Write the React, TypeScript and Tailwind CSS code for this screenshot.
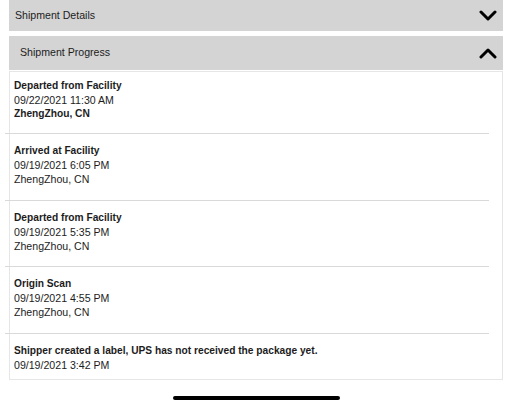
import React from 'react';

type Activity = {
  status: string;
  date: string;
  location?: string;
  boldLocation?: boolean;
};

const activities: Activity[] = [
  { status: 'Departed from Facility', date: '09/22/2021 11:30 AM', location: 'ZhengZhou, CN', boldLocation: true },
  { status: 'Arrived at Facility', date: '09/19/2021 6:05 PM', location: 'ZhengZhou, CN' },
  { status: 'Departed from Facility', date: '09/19/2021 5:35 PM', location: 'ZhengZhou, CN' },
  { status: 'Origin Scan', date: '09/19/2021 4:55 PM', location: 'ZhengZhou, CN' },
  { status: 'Shipper created a label, UPS has not received the package yet.', date: '09/19/2021 3:42 PM' },
];

// bottom padding per row, tuned to the reference row spacing
const rowPadding = ['pt-[7px] pb-[12px]', 'pt-[10px] pb-[14px]', 'pt-[10px] pb-[13px]', 'pt-[10px] pb-[14px]', 'pt-[10px] pb-[7px]'];

const Chevron = ({ up }: { up?: boolean }) => (
  <svg width="18" height="12" viewBox="0 0 18 12" fill="none">
    <polyline
      points={up ? '2,10 9,3 16,10' : '2,2 9,9 16,2'}
      stroke="#000"
      strokeWidth="3"
      strokeLinecap="round"
      strokeLinejoin="round"
    />
  </svg>
);

const App: React.FC = () => {
  return (
    <div className="w-[512px] h-[406px] bg-white flex flex-col px-[9px] text-[#1c1c1c] overflow-hidden" style={{ fontFamily: '"Liberation Sans", Arial, sans-serif' }}>
      {/* Shipment Details header */}
      <div className="h-[31px] bg-[#d4d4d4] flex items-center justify-between pl-[6px] pr-[6px]">
        <span className="text-[10.6px]">Shipment Details</span>
        <Chevron />
      </div>

      {/* Shipment Progress header */}
      <div className="mt-[5px] h-[34px] bg-[#d4d4d4] flex items-center justify-between pl-[11px] pr-[6px]">
        <span className="text-[10.6px]">Shipment Progress</span>
        <Chevron up />
      </div>

      {/* Activity list */}
      <div className="mt-[1px] border border-[#e6e6e6] bg-white">
        {activities.map((a, i) => (
          <div key={i}>
            {i > 0 && <div className="ml-[-5px] mr-[13px] h-px bg-[#d9d9d9]" />}
            <div className={`px-[4px] text-[10.6px] leading-[14px] ${rowPadding[i]}`}>
              <div className="font-bold text-[10.2px]">{a.status}</div>
              <div>{a.date}</div>
              {a.location && <div className={a.boldLocation ? 'font-bold text-[10.2px]' : ''}>{a.location}</div>}
            </div>
          </div>
        ))}
      </div>

      {/* Home indicator */}
      <div className="flex justify-center mt-[16px]">
        <div className="w-[167px] h-[4px] rounded-full bg-black" />
      </div>
    </div>
  );
};

export default App;
